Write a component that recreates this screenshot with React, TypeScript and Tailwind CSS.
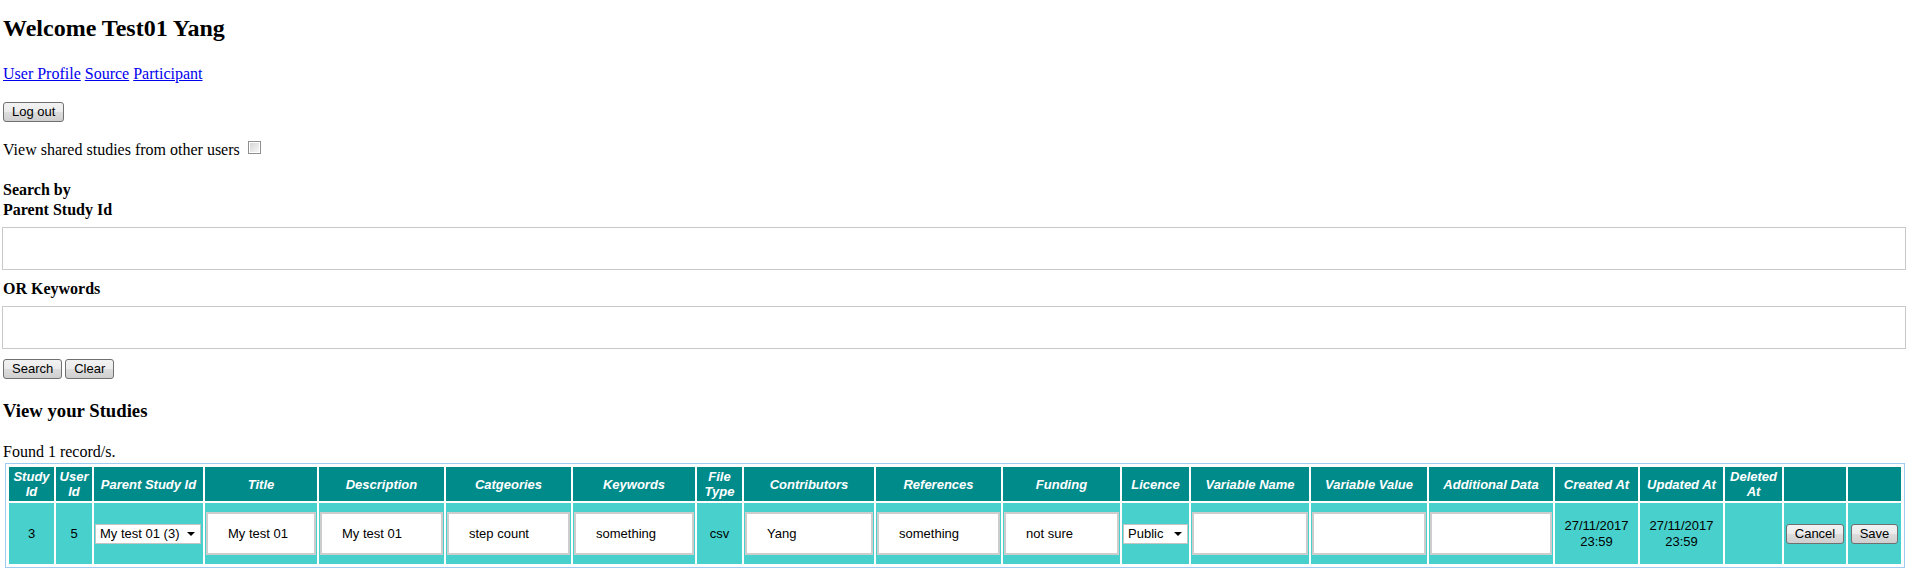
import React from "react";

const btn =
  "inline-block h-[20px] px-[8px] border border-[#707070] rounded-[3px] bg-[linear-gradient(#f2f2f2,#ebebeb_50%,#dddddd_50%,#cfcfcf)] font-['Liberation_Sans',sans-serif] text-[13px] leading-[18px] text-black align-top";

const columns: { label: string; width: number }[] = [
  { label: "Study Id", width: 45 },
  { label: "User Id", width: 36 },
  { label: "Parent Study Id", width: 109 },
  { label: "Title", width: 112 },
  { label: "Description", width: 125 },
  { label: "Catgeories", width: 125 },
  { label: "Keywords", width: 122 },
  { label: "File Type", width: 45 },
  { label: "Contributors", width: 130 },
  { label: "References", width: 125 },
  { label: "Funding", width: 117 },
  { label: "Licence", width: 67 },
  { label: "Variable Name", width: 118 },
  { label: "Variable Value", width: 116 },
  { label: "Additional Data", width: 124 },
  { label: "Created At", width: 83 },
  { label: "Updated At", width: 83 },
  { label: "Deleted At", width: 57 },
  { label: "", width: 62 },
  { label: "", width: 53 },
];

const FakeSelect: React.FC<{ value: string; width: string }> = ({ value, width }) => (
  <div
    className={`flex items-center justify-between h-[20px] pl-[4px] pr-[5px] bg-white border border-[#c4c4c4] text-[13px] leading-[18px] text-black ${width}`}
  >
    <span>{value}</span>
    <svg width="8" height="4" viewBox="0 0 8 4" aria-hidden="true">
      <path d="M0 0h8L4 4z" fill="#000" />
    </svg>
  </div>
);

const CellInput: React.FC<{ value?: string }> = ({ value = "" }) => (
  <input
    type="text"
    readOnly
    defaultValue={value}
    className="block w-full h-[43px] my-[8px] px-[20px] border-2 border-[#cdcdcd] bg-white text-[13px] text-black outline-none"
  />
);

const Checkbox: React.FC = () => (
  <span className="inline-block w-[13px] h-[13px] ml-[4px] mb-[1px] align-baseline border border-[#8f8f8f] bg-white p-[1px]">
    <span className="block w-full h-full bg-[linear-gradient(135deg,#d6d6d6,#f6f6f6)]" />
  </span>
);

const App: React.FC = () => {
  return (
    <div className="min-h-[574px] bg-white pl-[2px] pr-[6px] pt-[14px] pb-[6px] font-['Liberation_Serif',serif] text-[16px] leading-[20px] text-black">
      <h2 className="text-[24px] leading-[28px] font-bold pl-[1px]">Welcome Test01 Yang</h2>

      <div className="mt-[22px] pl-[1px]">
        <a href="#" className="text-[#0000ee] underline">User Profile</a>{" "}
        <a href="#" className="text-[#0000ee] underline">Source</a>{" "}
        <a href="#" className="text-[#0000ee] underline">Participant</a>
      </div>

      <div className="mt-[18px] pl-[1px] h-[20px]">
        <button type="button" className={btn}>Log out</button>
      </div>

      <div className="mt-[18px] pl-[1px]">
        View shared studies from other users <Checkbox />
      </div>

      <h4 className="mt-[20px] pl-[1px] font-bold">
        Search by
        <br />
        Parent Study Id
      </h4>
      <input
        type="text"
        readOnly
        className="block mt-[7px] w-full h-[43px] border border-[#c8c8c8] bg-white outline-none"
      />

      <h4 className="mt-[9px] pl-[1px] font-bold">OR Keywords</h4>
      <input
        type="text"
        readOnly
        className="block mt-[7px] w-full h-[43px] border border-[#c8c8c8] bg-white outline-none"
      />

      <div className="mt-[10px] pl-[1px] h-[20px] flex gap-[3px]">
        <button type="button" className={btn}>Search</button>
        <button type="button" className={btn}>Clear</button>
      </div>

      <h3 className="mt-[21px] pl-[1px] text-[18.72px] leading-[22px] font-bold">View your Studies</h3>

      <p className="mt-[20px] pl-[1px]">Found 1 record/s.</p>

      <table className="mt-[1px] ml-[3px] w-[1900px] table-fixed border border-[#9ecbf0] p-[1px] border-separate border-spacing-[2px] font-['Liberation_Sans',sans-serif] text-[13px]">
        <colgroup>
          {columns.map((c, i) => (
            <col key={i} style={{ width: c.width }} />
          ))}
        </colgroup>
        <thead>
          <tr className="h-[34px]">
            {columns.map((c, i) => (
              <th
                key={i}
                className="bg-[#008b8b] p-[1px] text-center align-middle text-white font-bold italic text-[13px] leading-[15px]"
              >
                {c.label}
              </th>
            ))}
          </tr>
        </thead>
        <tbody>
          <tr className="h-[61px] text-black">
            <td className="bg-[#48d1cc] p-[1px] text-center align-middle">3</td>
            <td className="bg-[#48d1cc] p-[1px] text-center align-middle">5</td>
            <td className="bg-[#48d1cc] p-[1px] align-middle">
              <FakeSelect value="My test 01 (3)" width="w-[106px]" />
            </td>
            <td className="bg-[#48d1cc] p-[1px] align-middle"><CellInput value="My test 01" /></td>
            <td className="bg-[#48d1cc] p-[1px] align-middle"><CellInput value="My test 01" /></td>
            <td className="bg-[#48d1cc] p-[1px] align-middle"><CellInput value="step count" /></td>
            <td className="bg-[#48d1cc] p-[1px] align-middle"><CellInput value="something" /></td>
            <td className="bg-[#48d1cc] p-[1px] text-center align-middle">csv</td>
            <td className="bg-[#48d1cc] p-[1px] align-middle"><CellInput value="Yang" /></td>
            <td className="bg-[#48d1cc] p-[1px] align-middle"><CellInput value="something" /></td>
            <td className="bg-[#48d1cc] p-[1px] align-middle"><CellInput value="not sure" /></td>
            <td className="bg-[#48d1cc] p-[1px] align-middle">
              <FakeSelect value="Public" width="w-[65px]" />
            </td>
            <td className="bg-[#48d1cc] p-[1px] align-middle"><CellInput /></td>
            <td className="bg-[#48d1cc] p-[1px] align-middle"><CellInput /></td>
            <td className="bg-[#48d1cc] p-[1px] align-middle"><CellInput /></td>
            <td className="bg-[#48d1cc] p-[1px] text-center align-middle leading-[16px]">27/11/2017 23:59</td>
            <td className="bg-[#48d1cc] p-[1px] text-center align-middle leading-[16px]">27/11/2017 23:59</td>
            <td className="bg-[#48d1cc] p-[1px] align-middle"></td>
            <td className="bg-[#48d1cc] p-[1px] text-center align-middle">
              <button type="button" className={btn}>Cancel</button>
            </td>
            <td className="bg-[#48d1cc] p-[1px] text-center align-middle">
              <button type="button" className={btn}>Save</button>
            </td>
          </tr>
        </tbody>
      </table>
    </div>
  );
};

export default App;
